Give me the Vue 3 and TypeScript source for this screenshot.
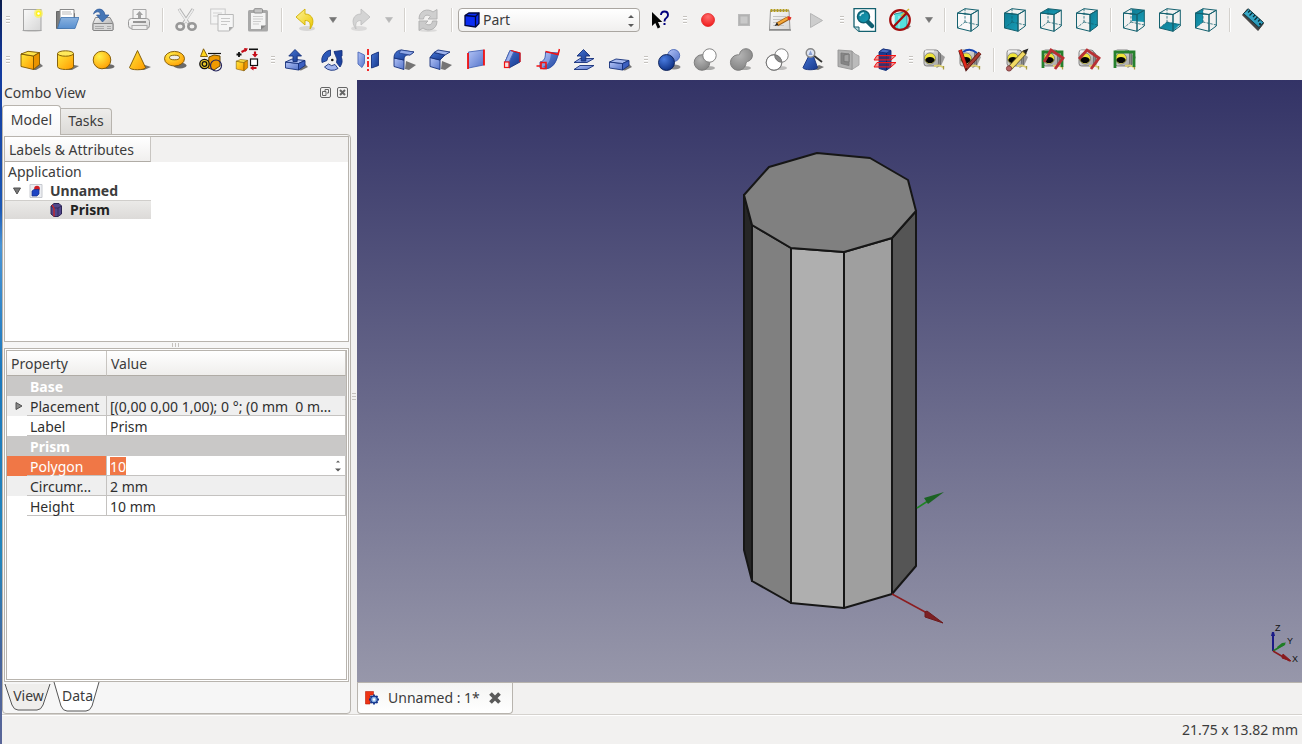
<script setup lang="ts">
import { onMounted, ref } from 'vue'

interface ToolItem {
  kind: 'button' | 'menu' | 'separator' | 'grip' | 'workbench'
  label?: string
  icon?: string
  off?: boolean
}

interface PropertyRow {
  name: string
  value?: string
  group?: boolean
  expandable?: boolean
  editing?: boolean
  shaded?: boolean
}

const shadow = (d: string) => `<path d="${d}" fill="#222" opacity=".6"/>`
const poly = (points: string, fill: string, stroke = '#15307a', width = 0.9) =>
  `<polygon points="${points}" fill="${fill}" stroke="${stroke}" stroke-width="${width}" stroke-linejoin="round"/>`

const cubeFaces: Record<string, string> = {
  front: '1.5,5 15,6.5 15,23.3 1.5,20',
  top: '1.5,5 9,.7 22.3,2.2 15,6.5',
  right: '15,6.5 22.3,2.2 22.3,18 15,23.3',
  rear: '10,1 22.3,2.2 22.3,14 10,13',
  bottom: '1.5,20 9,14 22.3,16 15,23.3',
  left: '1.5,5 9,.7 9,14 1.5,20',
}
const viewCube = (face?: string) =>
  (face ? '' : `<polygon points="${cubeFaces.front}" fill="#fff" opacity=".6"/>`) +
  (face ? `<polygon points="${cubeFaces[face]}" fill="url(#teal)"/>` : '') +
  `<g fill="none" stroke="#14616f" stroke-linejoin="round"><polygon points="${cubeFaces.front}"/>` +
  `<polygon points="${cubeFaces.top}"/><polygon points="${cubeFaces.right}"/>` +
  '<path d="M9 .7V14M1.5 20 9 14M9 14 22.3 17" stroke-dasharray="2.5 1.2" stroke-width=".8"/></g>'

const yellowBox = (dark = '#7a5500') =>
  poly('2,6 14.5,8 14.5,21.5 2,18.5', 'url(#gold)', dark) +
  poly('2,6 9,3.3 20.5,4.6 14.5,8', '#ffe34a', dark) +
  poly('14.5,8 20.5,4.6 20.5,16.5 14.5,21.5', '#e99300', dark)

const blueBox =
  shadow('M14 22 21 16 24 19 17 22.5Z') +
  poly('1.5,14 14.5,15.5 14.5,22 1.5,20', 'url(#sky)') +
  poly('1.5,14 8,11 21,12.5 14.5,15.5', '#a9bbef') +
  poly('14.5,15.5 21,12.5 21,17.5 14.5,22', '#3c5fc0')

const tape =
  '<path d="M14 20 19 6 23 9 19 18Z" fill="#333" opacity=".45"/>' +
  '<path d="M15 2.5 18.500 5.500V17L15 19" fill="#8a8a8a" stroke="#666" stroke-width=".8"/>' +
  '<rect x="2" y="2" width="14.500" height="16" rx="2.500" fill="url(#metal)" stroke="#6b6b6b" stroke-width=".8"/>' +
  '<path d="M3 3h9" stroke="#fff"/><circle cx="8" cy="10.500" r="5.600" fill="#efe438" stroke="#777" stroke-width=".8"/>' +
  '<path d="M3.200 12a5 4.300 0 0 1 9.600 0a5 4.300 0 0 1-9.600 0" fill="#050505"/>' +
  '<path d="M12 18 17 17.500 22 19.500" fill="none" stroke="#dccf72" stroke-width="1.800"/><path d="M21.500 18v3.500" stroke="#a79b42" stroke-width="1.300"/>'

const icons: Record<string, string> = {
  newDoc:
    '<ellipse cx="13" cy="22.6" rx="10" ry="1" fill="#888" opacity=".6"/><rect x="4.5" y="1.5" width="17.5" height="21" fill="url(#paper)" stroke="#a5a5a5"/>' +
    '<circle cx="19.5" cy="5.5" r="4.500" fill="#fff34a" opacity=".65"/><circle cx="19.5" cy="5.5" r="2.7" fill="#fff21d"/><circle cx="19.5" cy="5.5" r="1.2" fill="#fff"/>',
  open:
    '<path d="M1.5 20.5V3.500h7l1 2h10v14Z" fill="#7b7b7b" stroke="#666"/><path d="M5 1.5h14V12H5Z" fill="#fff" stroke="#888"/><path d="M7 4h9M7 6h10" stroke="#bbb"/>' +
    '<path d="M6 9.5H24L20 20.5H2.5Z" fill="url(#folder)" stroke="#3d72ae" stroke-width=".8"/>',
  save:
    '<path d="M4.5 9.5 2 15v7h20v-7l-3-5.5Z" fill="url(#metal)" stroke="#8b8b8b"/><rect x="2" y="15.5" width="20" height="7" rx="1" fill="#d7d7d7" stroke="#858585"/>' +
    '<path d="M4 18.500h9M4 20.500h9M16 18.500h4M16 20.500h4" stroke="#aaa"/><path d="M2.500 6C4-.5 13-1 14 7h4l-6.500 7L5.500 7h4C9 3.500 6 2.500 2.500 6Z" fill="#4576b6" stroke="#2e5896" stroke-width=".7"/>',
  print:
    '<path d="M6 11V1.500h13V11" fill="#f4f4f4" stroke="#a8a8a8"/><path d="M12.500 3 16 7h-2v4h-3V7H9Z" fill="#a2a2a2"/>' +
    '<rect x="1.500" y="10.500" width="21" height="10" rx="3" fill="url(#paper)" stroke="#999"/><path d="M6 14h13" stroke="#777" stroke-width="1.500"/><rect x="5" y="17.500" width="15" height="4" fill="#eee" stroke="#aaa"/>',
  cut:
    '<path d="M5 1 15 16M19 1 9 16" stroke="#b0b0b0" stroke-width="3"/><path d="M5 1.500 14 15M19 1.500 10 15" stroke="#ededed" stroke-width="1.600"/>' +
    '<g fill="none" stroke="#989898" stroke-width="2.600"><ellipse cx="6.200" cy="18.500" rx="3.700" ry="3.300"/><ellipse cx="18" cy="18.500" rx="3.700" ry="3.300"/></g>',
  copy:
    '<rect x=".7" y="1" width="14.500" height="15" fill="#f4f4f4" stroke="#c9c9c9"/><path d="M3 5h9M3 8h6" stroke="#d2d2d2"/>' +
    '<path d="M8 6.500h15.300V19l-4 4H8Z" fill="#f6f6f6" stroke="#b9b9b9"/><path d="M11 10.500h9M11 13.500h9M11 16.500h6" stroke="#c8c8c8"/><path d="M19 23v-4h4Z" fill="#aaa"/>',
  paste:
    '<rect x="2" y="2" width="20" height="21.500" rx="1.500" fill="#a8a8a8"/><path d="M5 5h14.500v12L16 21H5Z" fill="#f4f4f4"/><rect x="8" y=".7" width="8.500" height="4.300" rx="1" fill="#c4c4c4" stroke="#8c8c8c"/>' +
    '<path d="M7 8.500h10M7 11h10M7 13.500h8M7 16h6" stroke="#ccc"/><path d="M15 22v-4.500h5Z" fill="#888"/>',
  undo:
    '<ellipse cx="14" cy="20.500" rx="8" ry="2.500" fill="#999" opacity=".3"/><path d="M3 9 12 1v5c8 0 10.500 8 5 15 1-6-.5-8.500-5-8.500V17Z" fill="url(#lemon)" stroke="#d0b000" stroke-width=".9"/>',
  redo:
    '<ellipse cx="10" cy="20.500" rx="8" ry="2.500" fill="#999" opacity=".25"/><path d="M21 9 12 1v5C4 6 1.500 14 7 21c-1-6 .5-8.500 5-8.500V17Z" fill="#d4d4d4" stroke="#c0c0c0" stroke-width=".9"/>',
  refresh:
    '<ellipse cx="12" cy="22.500" rx="9" ry="1.500" fill="#999" opacity=".25"/><path d="M3 11C3 2 12 0 17 4l4-2.500V11h-9l2.500-2.500C11.500 6 8 7 7.500 11Z" fill="#cfcfcf" stroke="#b5b5b5"/><path d="M21 13c0 9-9 11-14 7l-4 2.500V13h9l-2.500 2.500c3 2.500 6.500 1.500 7-2.500Z" fill="#cbcbcb" stroke="#b2b2b2"/>',
  help:
    '<path d="M5 4v14l3.300-3 2.400 5.500 2.600-1.200L11 14h4.300Z" fill="#050505"/><path d="M14 7q0-3.500 3.500-3.500T21 7q0 2-2 3.300-1.500.9-1.500 3.200" fill="none" stroke="#00007c" stroke-width="1.900"/><path d="M16.500 15h2v2h-2z" fill="#00007c"/>',
  record: '<circle cx="12" cy="12" r="6.500" fill="url(#redball)" stroke="#e01414" stroke-width=".7"/>',
  stop: '<rect x="6.500" y="6.500" width="11" height="11" fill="#b2b2b2" stroke="#bbb"/><rect x="8.500" y="8.500" width="7" height="7" fill="#c9c9c9"/>',
  edit:
    '<path d="M2.500 2.500h18.500l1 19H1.500Z" fill="url(#paper)" stroke="#999"/><path d="M1 22h22" stroke="#888" stroke-width="1.500"/><path d="M2.500 2.500h18.500" stroke="#b39b1c" stroke-width="3" stroke-dasharray="2 1"/>' +
    '<path d="M5 8.500h13M5 11.500h12M5 14.500h6M5 17.500h11" stroke="#c4c4c4"/><path d="M9 16.500 20.500 10" stroke="#9b5a11" stroke-width="3.800"/><path d="M9.500 16 20 10" stroke="#f5a93c" stroke-width="2.200"/><path d="M20 8 23.500 9.500 22 12.500 19.500 11Z" fill="#df2e23"/><path d="M6.500 18 9 14.500l1.500 2.500Z" fill="#222"/>',
  play: '<path d="M6.500 5.500V19.500L18.500 12.500Z" fill="#cdcdcd" stroke="#b5b5b5"/>',
  fit:
    '<path d="M1 .7h21.500V23.300H6L1 19Z" fill="#fff" stroke="#14616f" stroke-width="1.300"/><path d="M1 19h5v4.300" fill="#b8d7dc" stroke="#14616f"/><path d="m14 13 5 5" stroke="#0f6072" stroke-width="4.500" stroke-linecap="round"/>' +
    '<circle cx="10.500" cy="8.800" r="6" fill="url(#teal)" stroke="#0f6072" stroke-width="1.500"/><path d="M7 8a4 4 0 0 1 4-3" fill="none" stroke="#bceaf1" stroke-width="1.500"/>',
  drawStyle:
    shadow('M8 22 18 17 22 18 19 21Z') +
    '<path d="M5.500 6 13 4.500 18 6v14l-8 2-4.500-3Z" fill="#54dedd" stroke="#319298"/><path d="M5.500 7v12M10 8v13" stroke="#b8f3f1"/><path d="m12 8 8-7" stroke="#d6ba31" stroke-width="1.500"/>' +
    '<circle cx="11" cy="12" r="9.800" fill="none" stroke="#a20d0d" stroke-width="2.200"/><path d="m17.700 5-13.500 14" stroke="#a20d0d" stroke-width="2.200"/>',
  cube: viewCube(),
  front: viewCube('front'),
  top: viewCube('top'),
  right: viewCube('right'),
  rear: viewCube('rear'),
  bottom: viewCube('bottom'),
  left: viewCube('left'),
  ruler:
    poly('1.5,7 6.5,1 22.5,15.5 17,22.500', '#444', '#333') +
    poly('2.5,5.500 7.500,1 22.500,14.500 18,19.500', 'url(#tealflat)', '#14363e', 1) +
    '<path d="m9 2.500-2 2M11.500 4.500 8.500 7.500M14 7l-2 2M16.500 9l-3 3M19 11.500l-2 2" stroke="#092d36" stroke-width="1.200"/><circle cx="19" cy="16" r="1" fill="#111"/>',
  box: shadow('M14 22 20 14.500 24 18 17 22Z') + yellowBox(),
  cylinder:
    shadow('M12 22 19 17 24 18 17 22Z') +
    '<path d="M2.500 5.500V18.500c0 4 16 4 16 0V5.500" fill="url(#gold)" stroke="#7a5500" stroke-width=".9"/><ellipse cx="10.500" cy="5.500" rx="8" ry="2.700" fill="#ffe95c" stroke="#7a5500" stroke-width=".9"/>',
  sphere: '<ellipse cx="16" cy="18.500" rx="7.500" ry="2.500" fill="#222" opacity=".65"/><circle cx="11" cy="12" r="8.800" fill="url(#goldball)" stroke="#7a5500" stroke-width=".9"/>',
  cone: shadow('M10 21.500 18 17 24 19 17 22Z') + '<path d="M10.500 2.500 2.500 19.500c0 3 16 3 16 0Z" fill="url(#gold)" stroke="#7a5500" stroke-width=".9"/>',
  torus:
    '<ellipse cx="17" cy="17.500" rx="6.500" ry="3" fill="#222" opacity=".65"/><ellipse cx="11.500" cy="10.700" rx="10" ry="7.300" fill="url(#goldball)" stroke="#7a5500" stroke-width=".9"/><ellipse cx="11.500" cy="9.500" rx="5" ry="2.300" fill="#f0eee9" stroke="#7a5500" stroke-width=".9"/>',
  primitives:
    '<path d="M10 9 15 7 21 8v10l-6 4-6-2Z" fill="#f09a00" stroke="#6b4a00"/><path d="M4.500.8 1.500 8.500h7Z" fill="#ffd51c" stroke="#7a5500" stroke-width=".9"/><path d="M9 5.500h13" stroke="#111" stroke-width="1.200"/>' +
    '<g fill="none" stroke="#111" stroke-width="1.300"><circle cx="5.500" cy="16" r="4.700" fill="#e8c82a"/><circle cx="5.500" cy="16" r="2.300"/></g><circle cx="17" cy="17.500" r="5.500" fill="none" stroke="#23235c" stroke-width="1.200"/>',
  builder:
    `<g transform="translate(0 9.500) scale(.62)">${yellowBox()}</g><path d="M14 1.300h9" stroke="#111" stroke-width="1.600"/><rect x="15.500" y="11" width="7" height="6.500" fill="#fff" stroke="#111" stroke-width="1.200"/>` +
    '<path d="M1.500 6.500h5M4 4v5" stroke="#111" stroke-width="1.800"/><path d="m6.500 4 5-2.500M20 3.500v4M21.500 20h-4" stroke="#c60d19" stroke-width="2.200"/><path d="m9 0 4 .5-2.500 3.500ZM17 6h6l-3 3.500ZM18.500 17.500v5L15 20Z" fill="#c60d19"/>',
  extrude: blueBox + '<path d="M11 1.500 4.800 8H9v5.500h4.200V8H17.500Z" fill="url(#royal)" stroke="#15307a" stroke-width=".9"/>',
  revolve:
    '<g stroke="#15307a" stroke-width=".9" stroke-linejoin="round"><path d="M2 14.500A10.300 10.300 0 0 1 10.500 2v5.500A5 5 0 0 0 7 12.500Z" fill="#2d59b8"/><path d="M4.500 19A10.300 10.300 0 0 0 18 20.500L15 16.500a5 5 0 0 1-6.500-.500Z" fill="#a3b6ee"/>' +
    '<path d="M20 19A10.300 10.300 0 0 0 21 8.500l1-.500V2.500l-8 1 1.500 4q2.500 3.500 1 7Z" fill="#1d429f"/></g><circle cx="12.300" cy="12" r="1.300" fill="#111"/>',
  mirror:
    poly('2,4 8.500,7 8.500,15 6,19.500 2,16', 'url(#sky)', '#4a68b8') + poly('15.500,7 22.500,4 22.500,17.500 15.500,20', 'url(#royal)') +
    '<path d="M12 1v22" stroke="#f21313" stroke-width="1.800" stroke-dasharray="6 2 2 2"/>',
  fillet:
    shadow('M13 21 14 13 24 17 17 22Z') + poly('2,10 12,12 12,21.500 2,18.500', 'url(#sky)') +
    '<path d="M2 10C2 5 5 2.500 9 2l13 2-4 3c-4-.5-6 1-6 5Z" fill="url(#royal)" stroke="#15307a" stroke-width=".9"/><path d="m9 2 13 2-4 3-11-2Z" fill="#8fa8e8" stroke="#15307a" stroke-width=".6"/>',
  chamfer:
    shadow('M13 21 14 13 24 17 17 22Z') + poly('2,9.500 12,12 12,21.500 2,18.500', 'url(#sky)') + poly('2,9.500 6,4.500 17,7 12,12', 'url(#royal)') +
    poly('6,4.500 10,2 22,4 17,7', '#9db2ec'),
  ruled: poly('4.500,4 19.500,2 19.500,17 4.500,20', 'url(#sky)', '#4a68b8') + '<path d="M4 5v16M20 1.500v16" stroke="#f21313" stroke-width="1.800"/>',
  loft:
    poly('5,14 10,2.500 20,5 20,14 9,20', 'url(#royal)') + poly('5,14 10,2.500 14,3.500 9,14', '#9db2ec', '#4a68b8') +
    '<path d="M11 2.500 20 5v9" fill="none" stroke="#f21313" stroke-width="1.200"/><rect x="4.500" y="14" width="4.500" height="5.500" fill="#f8dede" stroke="#f21313" stroke-width="1.200"/>',
  sweep:
    '<path d="M9.500 4c0 6-1 9-5.500 10v6c9 3 16-2 18.500-15Z" fill="url(#sky)" stroke="#3353aa" stroke-width=".9"/><path d="M15 5c-.5 8-3 12-8 13.500l4 2.500c6-1 10-7 11-15Z" fill="url(#royal)" opacity=".7"/>' +
    '<path d="M9.500 3.500 22 6.500 23.500 1M.5 18h5M5 14.500h5v6H5Z" fill="none" stroke="#f21313" stroke-width="1.600"/>',
  offset:
    poly('2,21.500 8,17.500 22,17.500 15,21.500', 'url(#sky)') + poly('2,14.500 8,10.500 22,10.500 15,14.500', 'url(#sky)') + '<path d="M11.500 1.500 5 8h4.200v5h4.600V8H18Z" fill="url(#royal)" stroke="#15307a" stroke-width=".9"/>',
  thickness: blueBox,
  boolean:
    '<ellipse cx="17" cy="19" rx="6.500" ry="2.500" fill="#222" opacity=".5"/><circle cx="16.700" cy="7.500" r="6" fill="url(#sky)" stroke="#4a68b8" stroke-width=".9"/><circle cx="9.500" cy="14.500" r="8" fill="url(#blueball)" stroke="#0b1f55" stroke-width=".9"/>',
  difference:
    '<ellipse cx="15" cy="20" rx="7" ry="2" fill="#222" opacity=".35"/><circle cx="9" cy="14.500" r="7.800" fill="url(#greyball)" stroke="#777" stroke-width=".9"/><circle cx="16.500" cy="7.500" r="6.700" fill="#fff" stroke="#777" stroke-width=".9"/>',
  union:
    '<ellipse cx="15" cy="20" rx="7" ry="2" fill="#222" opacity=".35"/><path d="M10.500 6.500a6.500 6.500 0 1 1 8 7c-1.500.500-1.500 2-1.700 3a7.800 7.800 0 1 1-8.500-9.700c1.200 0 2 .2 2.200-.3Z" fill="url(#greyball)" stroke="#777" stroke-width=".9"/>',
  common:
    '<ellipse cx="15" cy="20" rx="7" ry="2" fill="#222" opacity=".25"/><g stroke="#777" stroke-width=".9" fill="#fff"><circle cx="9" cy="14.500" r="7.800"/><circle cx="16.500" cy="7.500" r="6.700"/><circle cx="9" cy="14.500" r="7.800" fill="none"/></g><path d="M10 7a7.800 7.800 0 0 1 6.500 7A6.700 6.700 0 0 1 10 7Z" fill="#888" stroke="#777"/>',
  check:
    shadow('M12 21 18 17 23 19 17 22Z') + '<path d="M8 7.500 2 19.500c0 3 14.500 3 14.500 0L12 7Z" fill="url(#royal)" stroke="#15307a" stroke-width=".9"/><path d="m12 7 9 7" stroke="#333" stroke-width="1.800"/><circle cx="9.500" cy="5" r="4.300" fill="#dde4f3" stroke="#888" stroke-width="1.400"/><path d="m9.500 2.500-2 4.500h4Z" fill="#8a9fd2"/>',
  section:
    poly('15,3 18,6 22,8 22,17 15,21.500', '#bbb', '#a5a5a5') + poly('1,2 15,3 15,21.500 1,18.500', '#b0b0b0', '#949494') + poly('4,5 12,6 12,17.500 4,15.500', '#858585', '#7a7a7a') + poly('7,7 12,6 12,14 7,13.500', '#a2a2a2', '#777'),
  crossSections:
    poly('6,4 10,1 18,2.500 18,19 13,22.500 6,20.500', '#1c3990') + poly('6,4 10,1 18,2.500 13.500,5', '#4a69c0') + '<path d="M13.500 5v17" stroke="#0f2463"/>' +
    '<path d="M4 7.500h19l-5 4.500H1Z" fill="#e22" fill-opacity=".45" stroke="#f21313"/><path d="M4 14.500h19l-5 4.500H1Z" fill="#e22" fill-opacity=".45" stroke="#f21313"/><path d="M6 8.500h10V11H6ZM6 15.500h10V18H6Z" fill="#23306f" opacity=".7"/>',
  measureLinear: tape,
  measureAngular: tape + '<path d="M5 4q7-5 14 1" fill="none" stroke="#1746b4" stroke-width="2"/><path d="m2 2 6.500 18L22 5" fill="none" stroke="#561511" stroke-width="3.800"/><path d="m2 2 6.500 18" fill="none" stroke="#e0281a" stroke-width="2.600"/><path d="M8.500 20 22 5" stroke="#a83a30" stroke-width="2.600"/>',
  measureClear: tape + '<path d="M5 20 20 4" stroke="#5e5220" stroke-width="5"/><path d="M6 19 19 5" stroke="#f2da63" stroke-width="3.700"/><path d="m18 2.500 5.500-2-2.500 5.500Z" fill="#222"/><circle cx="4" cy="20.500" r="2.600" fill="#b86464" stroke="#7e4040" stroke-width=".9"/>',
  measureAll: tape + '<path d="M2 20V4h19v15" fill="none" stroke="#26812d" stroke-width="2.800"/><path d="m3 14 7-12 12 8-8 11" fill="none" stroke="#b93034" stroke-width="2.800"/>',
  measure3d: tape + '<path d="m2 11 8-9 12 8-8 11" fill="none" stroke="#b93034" stroke-width="2.800"/>',
  measureDelta: tape + '<path d="M2 20V4h19v15" fill="none" stroke="#26812d" stroke-width="2.800"/>',
}

const b = (label: string, icon: string, off = false): ToolItem => ({ kind: 'button', label, icon, off })
const menu = (label: string, off = false): ToolItem => ({ kind: 'menu', label, off })
const sep: ToolItem = { kind: 'separator' }
const grip: ToolItem = { kind: 'grip' }

const toolbars: ToolItem[][] = [
  [
    grip, b('New', 'newDoc'), b('Open', 'open'), b('Save', 'save'), b('Print', 'print', true), sep,
    b('Cut', 'cut', true), b('Copy', 'copy', true), b('Paste', 'paste', true), sep,
    b('Undo', 'undo'), menu('Undo history'), b('Redo', 'redo', true), menu('Redo history', true), sep,
    b('Refresh', 'refresh', true), sep, { kind: 'workbench' }, b("What's this?", 'help'), grip,
    b('Record macro', 'record'), b('Stop macro', 'stop', true), b('Edit macros', 'edit'), b('Run macro', 'play', true), grip,
    b('Fit all', 'fit'), b('Draw style', 'drawStyle'), menu('Draw styles'), sep,
    b('Axonometric', 'cube'), sep, b('Front', 'front'), b('Top', 'top'), b('Right', 'right'), sep,
    b('Rear', 'rear'), b('Bottom', 'bottom'), b('Left', 'left'), sep, b('Measure distance', 'ruler'),
  ],
  [
    grip, b('Box', 'box'), b('Cylinder', 'cylinder'), b('Sphere', 'sphere'), b('Cone', 'cone'), b('Torus', 'torus'),
    b('Create primitives', 'primitives'), b('Shape builder', 'builder'), grip,
    b('Extrude', 'extrude'), b('Revolve', 'revolve'), b('Mirror', 'mirror'), b('Fillet', 'fillet'), b('Chamfer', 'chamfer'),
    b('Ruled surface', 'ruled'), b('Loft', 'loft'), b('Sweep', 'sweep'), b('Offset', 'offset'), b('Thickness', 'thickness'), grip,
    b('Boolean', 'boolean'), b('Cut shapes', 'difference', true), b('Union', 'union', true), b('Intersection', 'common', true),
    b('Check geometry', 'check'), b('Section', 'section', true), b('Cross-sections', 'crossSections'), grip,
    b('Measure linear', 'measureLinear'), b('Measure angular', 'measureAngular'), sep,
    b('Clear measurements', 'measureClear'), b('Toggle all', 'measureAll'), b('Toggle 3D', 'measure3d'), b('Toggle delta', 'measureDelta'),
  ],
]

const properties: PropertyRow[] = [
  { name: 'Base', group: true },
  { name: 'Placement', value: '[(0,00 0,00 1,00); 0 °; (0 mm  0 m…', expandable: true, shaded: true },
  { name: 'Label', value: 'Prism' },
  { name: 'Prism', group: true },
  { name: 'Polygon', value: '10', editing: true },
  { name: 'Circumr…', value: '2 mm', shaded: true },
  { name: 'Height', value: '10 mm' },
]

const workbench = ref('Part')
const polygon = ref('10')
const polygonInput = ref<HTMLInputElement[]>([])

onMounted(() => {
  polygonInput.value[0]?.focus()
  polygonInput.value[0]?.select()
})
</script>

<template>
  <div class="desktop">
    <svg class="defs" aria-hidden="true">
      <defs>
        <linearGradient id="gold" x1="0" y1="0" x2="1" y2="1"><stop offset="0" stop-color="#ffe83a" /><stop offset="1" stop-color="#ff9a00" /></linearGradient>
        <radialGradient id="goldball" cx=".35" cy=".3" r=".8"><stop offset="0" stop-color="#fff04a" /><stop offset="1" stop-color="#ff9a00" /></radialGradient>
        <linearGradient id="lemon" x1="0" y1="0" x2="1" y2="1"><stop offset="0" stop-color="#fdf29a" /><stop offset="1" stop-color="#ecc800" /></linearGradient>
        <linearGradient id="sky" x1="0" y1="0" x2="1" y2="1"><stop offset="0" stop-color="#b3c3f5" /><stop offset="1" stop-color="#5474cb" /></linearGradient>
        <linearGradient id="royal" x1="0" y1="0" x2="1" y2="1"><stop offset="0" stop-color="#4575d4" /><stop offset="1" stop-color="#17388c" /></linearGradient>
        <radialGradient id="blueball" cx=".35" cy=".3" r=".8"><stop offset="0" stop-color="#4a7ce0" /><stop offset="1" stop-color="#092a7c" /></radialGradient>
        <radialGradient id="greyball" cx=".4" cy=".3" r=".9"><stop offset="0" stop-color="#b5b5b5" /><stop offset="1" stop-color="#777" /></radialGradient>
        <radialGradient id="redball" cx=".5" cy=".25" r=".8"><stop offset="0" stop-color="#ff6b6b" /><stop offset="1" stop-color="#ee1717" /></radialGradient>
        <linearGradient id="paper" x1="0" y1="0" x2="1" y2="1"><stop offset="0" stop-color="#fafafa" /><stop offset="1" stop-color="#d6d6d6" /></linearGradient>
        <linearGradient id="metal" x1="0" y1="0" x2="1" y2="1"><stop offset="0" stop-color="#f4f4f4" /><stop offset="1" stop-color="#a2a2a2" /></linearGradient>
        <linearGradient id="folder" x1="0" y1="0" x2="0" y2="1"><stop offset="0" stop-color="#8ab2df" /><stop offset="1" stop-color="#5990d0" /></linearGradient>
        <linearGradient id="teal" x1="0" y1="0" x2="1" y2="1"><stop offset="0" stop-color="#0d7c94" /><stop offset="1" stop-color="#189cb6" /></linearGradient>
        <linearGradient id="tealflat" x1="0" y1="0" x2="1" y2="1"><stop offset="0" stop-color="#3fb1cf" /><stop offset="1" stop-color="#2794b4" /></linearGradient>
      </defs>
    </svg>

    <div class="edge"></div>
    <div class="window">
      <header class="toolbars">
        <div v-for="(bar, i) in toolbars" :key="i" class="toolbar" role="toolbar">
          <template v-for="(item, j) in bar" :key="j">
            <span v-if="item.kind === 'separator'" class="separator"></span>
            <span v-else-if="item.kind === 'grip'" class="grip"></span>
            <div v-else-if="item.kind === 'workbench'" class="workbench">
              <svg class="workbench-icon" viewBox="0 0 16 16" aria-hidden="true">
                <path d="M1 3.500 5 1h10v10.500L11.500 15 1 13.500Z" fill="#0b2cf2" stroke="#00083f" stroke-width="1.300" />
                <path d="M1 3.500 11.500 4.500 15 1M11.500 4.500V15" fill="none" stroke="#00083f" stroke-width="1.300" />
              </svg>
              <select v-model="workbench" aria-label="Workbench"><option>Part</option></select>
              <svg class="workbench-arrows" viewBox="0 0 6 12" aria-hidden="true"><path d="M0 3 3 0 6 3ZM0 9 3 12 6 9Z" fill="#5a5a5a" /></svg>
            </div>
            <button v-else-if="item.kind === 'menu'" class="menu" type="button" :disabled="item.off" :aria-label="item.label">
              <svg viewBox="0 0 8 6" aria-hidden="true"><path d="M.5.5h7L4 5.500Z" fill="currentColor" stroke="currentColor" stroke-width=".6" /></svg>
            </button>
            <button v-else class="tool" type="button" :disabled="item.off" :aria-label="item.label">
              <svg viewBox="0 0 24 24" aria-hidden="true" v-html="icons[item.icon!]"></svg>
            </button>
          </template>
        </div>
      </header>

      <main class="work">
        <aside class="dock">
          <div class="dock-title">
            <h1>Combo View</h1>
            <button class="mini" type="button" aria-label="Float panel">
              <svg viewBox="0 0 11 11" aria-hidden="true"><rect x=".5" y=".5" width="10" height="10" rx="1.500" /><path d="M5 4V2.500h3.500V6H7M2.500 4.500H6V8.500H2.500Z" /></svg>
            </button>
            <button class="mini" type="button" aria-label="Close panel">
              <svg viewBox="0 0 11 11" aria-hidden="true"><rect x=".5" y=".5" width="10" height="10" rx="1.500" /><path d="m3 3 5 5M8 3 3 8" stroke-width="2" /></svg>
            </button>
          </div>
          <div class="tabs" role="tablist">
            <button class="tab active" type="button" role="tab" aria-selected="true">Model</button>
            <button class="tab" type="button" role="tab" aria-selected="false">Tasks</button>
          </div>
          <section class="pane">
            <div class="tree">
              <div class="tree-header"><span>Labels &amp; Attributes</span></div>
              <ul role="tree">
                <li class="root" role="treeitem">Application</li>
                <li class="document" role="treeitem" aria-expanded="true">
                  <svg class="twist" viewBox="0 0 8 8" aria-hidden="true"><path d="M.5 1h7L4 7Z" fill="#777" stroke="#505050" /></svg>
                  <svg class="node-icon" viewBox="0 0 14 14" aria-hidden="true">
                    <path d="M1 .5h12v13H1Z" fill="#eceef2" stroke="#c6c9cf" /><circle cx="8" cy="4.500" r="2.800" fill="#cf1e24" />
                    <path d="M3 7 5 5.500h5V10l-2 2H3Z" fill="#1d45c4" stroke="#152c86" stroke-width=".7" />
                  </svg>
                  Unnamed
                </li>
                <li class="body" role="treeitem" aria-selected="true">
                  <svg class="node-icon" viewBox="0 0 14 14" aria-hidden="true">
                    <path d="M2 3 5 .5h5L12.500 3v8L9 13.500H5L2 11Z" fill="#51478a" stroke="#2c2555" />
                    <path d="M2 3 5 5h4l3.500-2M9 5v8" fill="none" stroke="#2c2555" stroke-width=".8" /><path d="M5 5v8.500M5 5 3 2" fill="none" stroke="#d7201f" stroke-width="1.200" />
                  </svg>
                  Prism
                </li>
              </ul>
            </div>
            <div class="splitter"></div>
            <div class="props">
              <table>
                <thead><tr><th>Property</th><th>Value</th></tr></thead>
                <tbody>
                  <tr v-for="(row, i) in properties" :key="i" :class="{ group: row.group, shaded: row.shaded, editing: row.editing }">
                    <td v-if="row.group" colspan="2">{{ row.name }}</td>
                    <template v-else>
                      <td class="name">
                        <svg v-if="row.expandable" class="expander" viewBox="0 0 8 8" aria-hidden="true"><path d="M1 .5 7 4 1 7.500Z" fill="#888" stroke="#505050" /></svg>
                        <label v-if="row.editing" for="polygon">{{ row.name }}</label>
                        <span v-else>{{ row.name }}</span>
                      </td>
                      <td class="value">
                        <div v-if="row.editing" class="spin">
                          <input id="polygon" ref="polygonInput" v-model="polygon" type="text" />
                          <svg viewBox="0 0 6 12" aria-hidden="true"><path d="M1 2.500 3 .5 5 2.500ZM0 8.500 3 11.500 6 8.500Z" fill="#5a5a5a" /></svg>
                        </div>
                        <span v-else>{{ row.value }}</span>
                      </td>
                    </template>
                  </tr>
                </tbody>
              </table>
            </div>
            <div class="bottom-tabs" role="tablist">
              <button type="button" role="tab" aria-selected="false">
                <svg viewBox="0 0 48 30" aria-hidden="true"><path d="M1 2 8 23Q10 28 14 28H33Q37 28 39 23L46 2" fill="#efeeec" stroke="#555" /></svg>
                <span>View</span>
              </button>
              <button type="button" role="tab" aria-selected="true">
                <svg viewBox="0 0 48 30" aria-hidden="true"><path d="M1 0 8 24Q10 29 14 29H33Q37 29 39 24L46 0" fill="#fff" stroke="#555" /></svg>
                <span>Data</span>
              </button>
            </div>
          </section>
        </aside>

        <div class="dock-handle"></div>

        <section class="document-area">
          <div class="viewport">
            <svg viewBox="0 0 945 602" role="img" aria-label="Prism with ten sides">
              <g stroke="#161616" stroke-width="2" stroke-linejoin="round">
                <polygon points="387,115 395,145 395,501 387,470" fill="#262626" />
                <polygon points="395,145 434,168 434,523 395,501" fill="#808080" />
                <polygon points="434,168 487,172 487,528 434,523" fill="#afafaf" />
                <polygon points="487,172 535,158 535,514 487,528" fill="#9f9f9f" />
                <polygon points="535,158 559,131 559,486 535,514" fill="#555" />
                <polygon points="387,115 412,87 460,73 513,78 551,100 559,131 535,158 487,172 434,168 395,145" fill="#808080" />
              </g>
              <path d="M560 428 574 419" stroke="#1f8425" stroke-width="1.500" />
              <polygon points="567,418 587,412 571,424" fill="#1b6223" />
              <path d="M535 514 570 533" stroke="#8c1d20" stroke-width="1.500" />
              <polygon points="568,532 570,531 586,543 568,537" fill="#7c2023" stroke="#6c1a1c" />
              <g class="axes">
                <path d="M916 571V553" stroke="#1b1b87" stroke-width="2" /><path d="M914 556h4l-1-4h-2Z" fill="#1b1b87" />
                <path d="m916 571 12-7" stroke="#1f7d24" stroke-width="1.500" /><path d="m920 567 5-4 4-.500-2 3-6 3Z" fill="#1f7d24" />
                <path d="m916 571 17 10" stroke="#8a1b1e" stroke-width="1.500" /><path d="m926 574 8 7-9-3Z" fill="#8a1b1e" stroke="#8a1b1e" />
                <text x="918" y="551">Z</text><text x="930" y="564">Y</text><text x="935" y="582">X</text>
              </g>
            </svg>
          </div>
          <div class="doc-tabs">
            <div class="doc-tab">
              <svg class="app-icon" viewBox="0 0 14 14" aria-hidden="true">
                <path d="M.5.5h8v3.500H5V13H.5Z" fill="#ee3414" stroke="#b81c08" stroke-width=".6" />
                <path d="M9 3.500v10M4 8.500h10M5.500 5l7 7M12.500 5l-7 7" stroke="#102f85" stroke-width="1.800" />
                <circle cx="9" cy="8.500" r="3.300" fill="#8db4e6" stroke="#14378f" stroke-width="1.200" /><circle cx="9" cy="8.500" r="1.200" fill="#fff" />
              </svg>
              <span>Unnamed : 1*</span>
              <button type="button" aria-label="Close document">
                <svg viewBox="0 0 12 12" aria-hidden="true"><path d="m1.500 1.500 9 9M10.500 1.500l-9 9" stroke="#5a5a5a" stroke-width="3.800" /></svg>
              </button>
            </div>
          </div>
        </section>
      </main>

      <footer class="status">21.75 x 13.82 mm</footer>
    </div>
  </div>
</template>

<style>
html,
body {
  margin: 0;
  background: #f2f1f0;
}
</style>

<style scoped>
* {
  box-sizing: border-box;
}
.desktop {
  display: flex;
  min-height: 100vh;
  font: 14px/20px 'Noto Sans', 'Open Sans', sans-serif;
  color: #3c3c3c;
}
.defs {
  position: absolute;
  width: 0;
  height: 0;
}
.edge {
  flex: none;
  width: 2px;
  background: linear-gradient(#0a1c4c, #12389c 8%, #1c58b4 28%, #4a94d4 33%, #1c78bc 50%, #2486bc 75%, #46649c 88%, #5a6698);
}
.window {
  flex: 1;
  min-width: 0;
  display: flex;
  flex-direction: column;
  background: #f2f1f0;
}
button {
  padding: 0;
  border: 0;
  background: none;
  font: inherit;
  color: inherit;
}
svg {
  display: block;
}
.toolbar {
  display: flex;
  align-items: center;
  height: 40px;
}
.tool {
  flex: none;
  display: grid;
  place-items: center;
  width: 36px;
  height: 36px;
}
.tool svg {
  width: 24px;
  height: 24px;
}
.menu {
  flex: none;
  display: grid;
  place-items: center;
  width: 20px;
  height: 36px;
  color: #757575;
}
.menu:disabled {
  color: #b8b8b8;
}
.menu svg {
  width: 8px;
  height: 6px;
}
.separator {
  flex: none;
  width: 2px;
  height: 24px;
  margin: 0 4px 0 5px;
  background: linear-gradient(90deg, #d4d1cd 50%, #fff 50%);
}
.grip {
  flex: none;
  width: 4px;
  height: 8px;
  margin: 0 3px 0 6px;
  background: repeating-linear-gradient(#c5c2be 0 1px, #fff 1px 2px, transparent 2px 3px);
}
.grip:first-child {
  margin-left: 4px;
}
.workbench {
  position: relative;
  flex: none;
  width: 182px;
  margin: 0 1px;
}
.workbench select {
  display: block;
  width: 100%;
  height: 24px;
  padding: 0 20px 0 24px;
  border: 1px solid #aaa6a1;
  border-radius: 4px;
  appearance: none;
  background: linear-gradient(#fff, #f0efee);
  font: inherit;
  color: inherit;
}
.workbench-icon {
  position: absolute;
  left: 6px;
  top: 4px;
  width: 16px;
  height: 16px;
}
.workbench-arrows {
  position: absolute;
  right: 6px;
  top: 7px;
  width: 6px;
  height: 12px;
}
.work {
  flex: 1;
  display: flex;
}
.dock {
  flex: none;
  display: flex;
  flex-direction: column;
  width: 349px;
}
.dock-title {
  display: flex;
  align-items: center;
  gap: 6px;
  height: 25px;
  padding: 0 3px 0 2px;
}
.dock-title h1 {
  flex: 1;
  margin: 0;
  font: inherit;
}
.mini svg {
  width: 11px;
  height: 11px;
  fill: none;
  stroke: #666;
}
.tabs {
  display: flex;
  align-items: flex-end;
  height: 29px;
}
.tab {
  width: 51px;
  height: 26px;
  padding-bottom: 2px;
  border: 1px solid #b8b4ae;
  border-bottom: 0;
  border-left: 0;
  border-radius: 0 4px 0 0;
  background: linear-gradient(#eeedeb, #dcdad7);
}
.tab.active {
  position: relative;
  width: 59px;
  height: 30px;
  margin-bottom: -1px;
  border-left: 1px solid #b8b4ae;
  border-radius: 4px 4px 0 0;
  background: linear-gradient(#fff, #f7f7f7);
}
.pane {
  flex: 1;
  display: flex;
  flex-direction: column;
  padding: 1px;
  border: 1px solid #b8b4ae;
  border-radius: 0 4px 4px 4px;
  background: #f6f6f6;
}
.tree {
  height: 206px;
  border: 1px solid #b8b4ae;
  background: #fff;
}
.tree-header {
  height: 25px;
  background: #f2f1f0;
}
.tree-header span {
  display: block;
  width: 146px;
  height: 25px;
  padding: 3px 4px 0;
  border-right: 1px solid #c8c5c1;
  border-bottom: 1px solid #b0aca6;
  background: linear-gradient(#fff, #f0efee);
}
.tree ul {
  margin: 0;
  padding: 0;
  list-style: none;
}
.tree li {
  display: flex;
  align-items: center;
  width: 146px;
  height: 19px;
  font-weight: 700;
}
.tree .root {
  padding-left: 3px;
  font-weight: 400;
}
.tree .document {
  padding-left: 8px;
}
.tree .body {
  padding-left: 44px;
  border-top: 1px solid #d0cecb;
  background: linear-gradient(#ebeae8, #dcdad8);
  color: #222;
}
.twist {
  width: 8px;
  height: 8px;
  margin-right: 8px;
}
.node-icon {
  width: 14px;
  height: 14px;
  margin-right: 7px;
}
.splitter {
  height: 6px;
  background: repeating-linear-gradient(90deg, #c5c2be 0 1px, transparent 1px 3px) center / 9px 4px no-repeat;
}
.props {
  flex: 1;
  padding: 1px;
  border: 1px solid #b8b4ae;
  background: #fff;
  outline: 1px solid #b8b4ae;
  outline-offset: -3px;
}
table {
  width: 100%;
  padding: 1px;
  border-spacing: 0;
  table-layout: fixed;
}
th {
  height: 25px;
  padding: 2px 4px 0;
  border-right: 1px solid #c8c5c1;
  border-bottom: 1px solid #b0aca6;
  background: linear-gradient(#fff, #efeeec);
  font-weight: 400;
  text-align: left;
}
th:first-child {
  width: 100px;
}
td {
  height: 20px;
  padding: 1px 0 0 3px;
  border-bottom: 1px solid #c4c2c0;
  line-height: 18px;
  white-space: pre;
  overflow: hidden;
  color: #2e2e2e;
}
td.name {
  position: relative;
  padding: 2px 0 0 23px;
  border-right: 1px solid #c4c2c0;
  border-bottom: 0;
  background: linear-gradient(#c4c2c0, #c4c2c0) 20px 100% / 100% 1px no-repeat;
}
td.value {
  padding-top: 2px;
  line-height: 17px;
  border-right: 1px solid #c4c2c0;
}
.group td {
  padding: 2px 0 0 23px;
  border-color: #c9c8c7;
  background: #c9c8c7;
  line-height: 17px;
  color: #fff;
  font-weight: 700;
}
.shaded td {
  background-color: #efefef;
}
.editing .name {
  background-color: #f07746;
  color: #fff;
}
.expander {
  position: absolute;
  left: 8px;
  top: 6px;
  width: 8px;
  height: 8px;
}
.editing td.value {
  padding-top: 0;
}
.spin {
  display: flex;
  align-items: center;
  padding-right: 4px;
}
.spin input {
  flex: 1;
  min-width: 0;
  height: 19px;
  padding: 1px 0 0;
  border: 0;
  outline: 0;
  background: none;
  font: inherit;
  color: inherit;
}
.spin input::selection {
  background: #f07746;
  color: #fff;
}
.spin svg {
  width: 6px;
  height: 12px;
}
.bottom-tabs {
  display: flex;
  height: 30px;
}
.bottom-tabs button {
  display: grid;
  width: 49px;
}
.bottom-tabs svg,
.bottom-tabs span {
  grid-area: 1 / 1;
}
.bottom-tabs svg {
  width: 48px;
  height: 30px;
}
.bottom-tabs span {
  padding-top: 4px;
}
.dock-handle {
  flex: none;
  width: 6px;
  background: repeating-linear-gradient(#c5c2be 0 1px, transparent 1px 3px) center / 4px 8px no-repeat;
}
.document-area {
  flex: 1;
  min-width: 0;
  display: flex;
  flex-direction: column;
}
.viewport {
  flex: 1;
  min-height: 0;
  display: grid;
  background: linear-gradient(#333366, #9797aa);
}
.viewport svg {
  width: 100%;
  height: 100%;
}
.axes text {
  font: 9px 'Liberation Sans', sans-serif;
  fill: #111;
}
.doc-tabs {
  display: flex;
  height: 32px;
  border-top: 1px solid #b8b4ae;
}
.doc-tab {
  display: flex;
  align-items: center;
  gap: 9px;
  width: 156px;
  height: 31px;
  padding: 0 10px 0 7px;
  border: 1px solid #b8b4ae;
  border-top: 0;
  border-radius: 0 0 4px 4px;
  background: linear-gradient(#f4f4f3, #fff);
}
.app-icon {
  width: 14px;
  height: 14px;
}
.doc-tab button svg {
  width: 12px;
  height: 12px;
}
.status {
  display: flex;
  align-items: center;
  justify-content: flex-end;
  height: 30px;
  padding-right: 4px;
  border-top: 1px solid #d5d2ce;
  box-shadow: inset 0 1px #fff;
}
</style>
